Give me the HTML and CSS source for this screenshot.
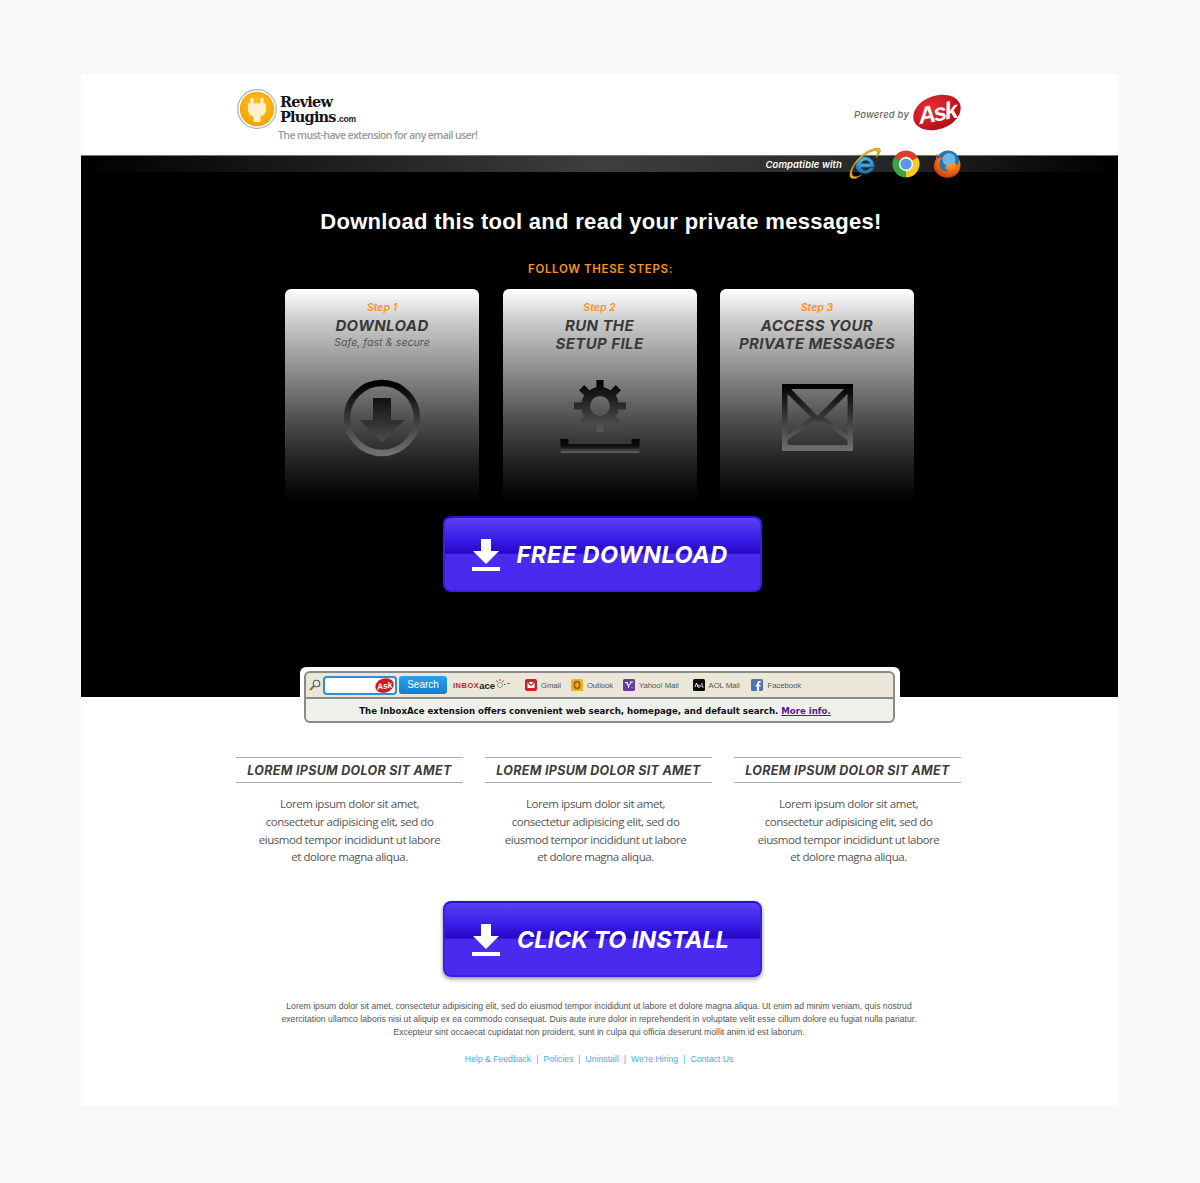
FILE: index.html
```html
<!DOCTYPE html>
<html lang="en">
<head>
<meta charset="utf-8">
<title>Review Plugins</title>
<link rel="stylesheet" href="styles.css">
</head>
<body>
<svg class="defs" width="0" height="0" aria-hidden="true">
  <defs>
    <linearGradient id="iconGrad" x1="0" y1="0" x2="0" y2="1">
      <stop offset="0" stop-color="#000"/>
      <stop offset="1" stop-color="#707070"/>
    </linearGradient>
    <linearGradient id="arrowGrad" x1="0" y1="0" x2="0" y2="1">
      <stop offset="0" stop-color="#111"/>
      <stop offset="1" stop-color="#4c4c4c"/>
    </linearGradient>
    <linearGradient id="baseGrad" x1="0" y1="0" x2="0" y2="1">
      <stop offset="0" stop-color="#000"/>
      <stop offset="0.55" stop-color="#111"/>
      <stop offset="1" stop-color="#666"/>
    </linearGradient>
    <linearGradient id="gearGrad" x1="0" y1="0" x2="0" y2="1">
      <stop offset="0" stop-color="#000"/>
      <stop offset="1" stop-color="#5c5c5c"/>
    </linearGradient>
    <radialGradient id="goldGrad" cx="0.5" cy="0.4" r="0.6">
      <stop offset="0" stop-color="#ffc52e"/>
      <stop offset="1" stop-color="#f5a200"/>
    </radialGradient>
    <radialGradient id="askGrad" cx="0.4" cy="0.3" r="0.8">
      <stop offset="0" stop-color="#ee2a33"/>
      <stop offset="1" stop-color="#a50d14"/>
    </radialGradient>
    <radialGradient id="ieGrad" cx="0.5" cy="0.3" r="0.8">
      <stop offset="0" stop-color="#5ec3f0"/>
      <stop offset="1" stop-color="#0e62a8"/>
    </radialGradient>
    <radialGradient id="foxGrad" cx="0.6" cy="0.3" r="0.8">
      <stop offset="0" stop-color="#ffc928"/>
      <stop offset="0.55" stop-color="#ee6a12"/>
      <stop offset="1" stop-color="#b72d0c"/>
    </radialGradient>
    <mask id="gearMask" maskUnits="userSpaceOnUse" x="0" y="0" width="80" height="76">
      <g transform="translate(40 26)">
        <circle r="19" fill="#fff"/>
        <g fill="#fff">
          <rect x="-3.6" y="-26" width="7.2" height="12"/>
          <rect x="-3.6" y="-26" width="7.2" height="12" transform="rotate(45)"/>
          <rect x="-3.6" y="-26" width="7.2" height="12" transform="rotate(90)"/>
          <rect x="-3.6" y="-26" width="7.2" height="12" transform="rotate(135)"/>
          <rect x="-3.6" y="-26" width="7.2" height="12" transform="rotate(180)"/>
          <rect x="-3.6" y="-26" width="7.2" height="12" transform="rotate(225)"/>
          <rect x="-3.6" y="-26" width="7.2" height="12" transform="rotate(270)"/>
          <rect x="-3.6" y="-26" width="7.2" height="12" transform="rotate(315)"/>
        </g>
        <circle r="10" fill="#000"/>
      </g>
    </mask>
  </defs>
</svg>

<div class="panel">
  <header class="top">
    <div class="brand">
      <svg class="brand-mark" viewBox="0 0 40 40" aria-hidden="true">
        <circle cx="20" cy="20" r="19.300" fill="#fff" stroke="#a9b5a8" stroke-width="1.200"/>
        <circle cx="20" cy="20" r="17.200" fill="url(#goldGrad)"/>
        <path d="M13.500 9h3v5.500h7V9h3v5.500h2.500v6.500c0 3.400-2.500 5.800-5.500 6.200V33h-7v-5.800c-3-.4-5.500-2.800-5.500-6.200v-6.500h2.500z" fill="#fff0cc"/>
      </svg>
      <div class="brand-copy">
        <div class="brand-name">
          <span class="brand-line">Review</span>
          <span class="brand-line">Plugins<small class="brand-com">.com</small></span>
        </div>
        <div class="tagline">The must-have extension for any email user!</div>
      </div>
    </div>
    <div class="powered">
      <span class="powered-label">Powered by</span>
      <svg class="ask-logo" viewBox="0 0 48 37" aria-hidden="true">
        <ellipse cx="24" cy="18.500" rx="24.500" ry="16.800" transform="rotate(-20 24 18.500)" fill="url(#askGrad)"/>
        <text x="24" y="27" text-anchor="middle" class="ask-text" transform="rotate(-10 24 18.500)">Ask</text>
      </svg>
    </div>
  </header>

  <section class="hero">
    <div class="compat">
      <span class="compat-label">Compatible with</span>
      <svg class="ie" viewBox="0 0 34 34" aria-hidden="true">
        <path d="M8.600 18.600a9.400 9.400 0 1 1 18.700 1.700H14.200c.5 3.400 5.900 4.700 8.800.7h4c-3.300 8.200-18.400 7.500-18.400-2.400zM14.300 16.600h8.800c-.7-4.300-8.200-4.300-8.800 0z" fill="url(#ieGrad)" fill-rule="evenodd" stroke="#0c4f8c" stroke-width=".5"/>
        <path d="M4 31C0 28 6 15 15 8 23 2 31 -.5 33 2c1.500 2-1 6-4 9 1-3 2-6 .5-7C27 2.500 20 6 14 11 7 17 3 25 6 29c2 1.300 6 .3 9-1.500-4 3.500-8 5.300-11 3.500z" fill="#e9b21c" stroke="#8d6a10" stroke-width=".4"/>
      </svg>
      <svg class="browser" viewBox="0 0 28 28" aria-hidden="true">
        <path d="M14 14 2.300 7.200A13.500 13.500 0 0 1 25.700 7.200z" fill="#dc3c2e"/>
        <path d="M14 14 25.700 7.200A13.500 13.500 0 0 1 14 27.500z" fill="#f7cb1e"/>
        <path d="M14 14 14 27.500A13.500 13.500 0 0 1 2.300 7.200z" fill="#3aa443"/>
        <circle cx="14" cy="14" r="7.200" fill="#f2f2f2"/>
        <circle cx="14" cy="14" r="5.600" fill="#5a97df"/>
      </svg>
      <svg class="browser" viewBox="0 0 28 28" aria-hidden="true">
        <circle cx="15" cy="12" r="11.500" fill="#2f72b4"/>
        <circle cx="16" cy="9.500" r="6.500" fill="#6cb6e6"/>
        <path d="M4 3c-1 2-1 4-1 6C.5 13 0 18 2.500 21.500 6 27 13 29 19 27c5-1.500 8.500-6 8.500-12 0-2-.6-4-1.500-5.500.2 3-1 5-3 6.500 .5-2-.5-3-2-4-1 3-6 1.500-8 4-1.500 2 .5 4.500 3 5-4 1.500-9-1-9.500-6.500C5.800 11.500 7.500 9 10 8 7.500 7.500 5.500 8.500 4.500 9.500 4 7.500 4 5 4 3z" fill="url(#foxGrad)"/>
      </svg>
    </div>

    <h1 class="headline">Download this tool and read your private messages!</h1>
    <p class="follow">FOLLOW THESE STEPS:</p>

    <div class="steps">
      <article class="step">
        <p class="step-no">Step 1</p>
        <h2 class="step-title">DOWNLOAD</h2>
        <p class="step-sub">Safe, fast &amp; secure</p>
        <svg class="step-icon step-icon-a" width="78" height="78" viewBox="0 0 78 78" aria-hidden="true">
          <circle cx="39" cy="39" r="35" fill="none" stroke="url(#iconGrad)" stroke-width="6.500"/>
          <path d="M30 19h18v22h14L39 63 16 41h14z" fill="url(#arrowGrad)"/>
        </svg>
      </article>
      <article class="step">
        <p class="step-no">Step 2</p>
        <h2 class="step-title">RUN THE<br>SETUP FILE</h2>
        <svg class="step-icon step-icon-b" width="80" height="76" viewBox="0 0 80 76" aria-hidden="true">
          <rect width="80" height="54" fill="url(#gearGrad)" mask="url(#gearMask)"/>
          <path d="M0.500 59h8v5h63v-5h8v14h-79z" fill="url(#baseGrad)"/>
        </svg>
      </article>
      <article class="step">
        <p class="step-no">Step 3</p>
        <h2 class="step-title">ACCESS YOUR<br>PRIVATE MESSAGES</h2>
        <svg class="step-icon step-icon-c" width="71" height="67" viewBox="0 0 71 67" aria-hidden="true">
          <path fill="url(#iconGrad)" fill-rule="evenodd" d="M0 0h71v67H0zM9 5h53L35.500 32zM5.500 10 29 33 5.500 51zM65.500 10 42 33 65.500 51zM5.500 61v-5L32 36.500l3.500 2.500 3.500-2.500L65.500 56v5z"/>
        </svg>
      </article>
    </div>

    <a class="cta" href="#">
      <svg class="cta-icon" viewBox="0 0 28 33" aria-hidden="true">
        <path d="M9 0h10v12h8L14 25 1 12h8zM0 28h28v4H0z" fill="#fff"/>
      </svg>
      <span class="cta-label">FREE DOWNLOAD</span>
    </a>
  </section>

  <div class="bar-wrap">
    <div class="bar">
      <div class="bar-top">
        <svg class="bar-glass" viewBox="0 0 12 12" aria-hidden="true">
          <circle cx="7.500" cy="4.500" r="3.300" fill="#d7eef8" stroke="#555" stroke-width="1.100"/>
          <path d="M5 7 1 11" stroke="#9a6a24" stroke-width="2"/>
        </svg>
        <div class="bar-input">
          <svg class="bar-ask" viewBox="0 0 20 16" aria-hidden="true">
            <ellipse cx="10" cy="8" rx="10" ry="7.500" transform="rotate(-18 10 8)" fill="#d5161e"/>
            <text x="10" y="11.500" text-anchor="middle" class="bar-ask-text" transform="rotate(-10 10 8)">Ask</text>
          </svg>
        </div>
        <span class="bar-search">Search</span>
        <span class="bar-inbox"><b class="inbox-red">INBOX</b><b class="inbox-dark">ace</b>
          <svg class="inbox-splat" viewBox="0 0 15 10" aria-hidden="true">
            <circle cx="5" cy="6" r="2.400" fill="#f4f0e4" stroke="#777" stroke-width=".8"/>
            <path d="M5 2V0M2.500 3 1.500 1.500M7.500 3 8.500 1.500M9 5.500h1.500" stroke="#c8242a" stroke-width="1"/>
            <path d="M12 4.500h3" stroke="#555" stroke-width=".8"/>
          </svg>
        </span>
        <span class="bar-item bar-gmail">
          <svg class="bar-ico" viewBox="0 0 12 12" aria-hidden="true">
            <rect width="12" height="12" rx="2" fill="#c9222c"/>
            <path d="M2.500 3h7v6h-7z" fill="#fff"/>
            <path d="M2.500 3 6 6.500 9.500 3" fill="none" stroke="#c9222c" stroke-width="1.200"/>
          </svg>Gmail</span>
        <span class="bar-item">
          <svg class="bar-ico" viewBox="0 0 12 12" aria-hidden="true">
            <rect width="12" height="12" rx="1.500" fill="#f2b01e"/>
            <ellipse cx="6" cy="6" rx="2.700" ry="3.500" fill="none" stroke="#8a5a06" stroke-width="1.500"/>
          </svg>Outlook</span>
        <span class="bar-item">
          <svg class="bar-ico" viewBox="0 0 12 12" aria-hidden="true">
            <rect width="12" height="12" rx="1.500" fill="#6a3a9c"/>
            <path d="M2 3.500h3M3.500 3.500 5.500 7v2M8 3.500 5.500 7M7 3h3M9 8.500v.5" stroke="#fff" stroke-width="1.100" fill="none"/>
          </svg>Yahoo! Mail</span>
        <span class="bar-item bar-aol">
          <svg class="bar-ico" viewBox="0 0 12 12" aria-hidden="true">
            <rect width="12" height="12" rx="1.500" fill="#0c0c0c"/>
            <path d="M2 8 3.500 4 5 8M6 6a1.200 1.200 0 1 0 .01 0M9 4v4h1.500" stroke="#fff" stroke-width=".9" fill="none"/>
          </svg>AOL Mail</span>
        <span class="bar-item bar-fb">
          <svg class="bar-ico" viewBox="0 0 12 12" aria-hidden="true">
            <rect width="12" height="12" rx="1.500" fill="#4a74b4"/>
            <path d="M8 12V7.500h1.500V5.700H8V4.600c0-.6.300-.9.900-.9h.8V2H8.500C7 2 6.100 3 6.100 4.400v1.300H4.700v1.800h1.400V12z" fill="#fff"/>
          </svg>Facebook</span>
      </div>
      <p class="bar-note">The InboxAce extension offers convenient web search, homepage, and default search. <a class="bar-more" href="#">More info.</a></p>
    </div>
  </div>

  <section class="columns">
    <article class="col">
      <h3 class="col-title">LOREM IPSUM DOLOR SIT AMET</h3>
      <p class="col-text">Lorem ipsum dolor sit amet,<br>consectetur adipisicing elit, sed do<br>eiusmod tempor incididunt ut labore<br>et dolore magna aliqua.</p>
    </article>
    <article class="col col-mid">
      <h3 class="col-title">LOREM IPSUM DOLOR SIT AMET</h3>
      <p class="col-text">Lorem ipsum dolor sit amet,<br>consectetur adipisicing elit, sed do<br>eiusmod tempor incididunt ut labore<br>et dolore magna aliqua.</p>
    </article>
    <article class="col col-end">
      <h3 class="col-title">LOREM IPSUM DOLOR SIT AMET</h3>
      <p class="col-text">Lorem ipsum dolor sit amet,<br>consectetur adipisicing elit, sed do<br>eiusmod tempor incididunt ut labore<br>et dolore magna aliqua.</p>
    </article>
  </section>

  <a class="cta cta-shadow" href="#">
    <svg class="cta-icon" viewBox="0 0 28 33" aria-hidden="true">
      <path d="M9 0h10v12h8L14 25 1 12h8zM0 28h28v4H0z" fill="#fff"/>
    </svg>
    <span class="cta-label">CLICK TO INSTALL</span>
  </a>

  <footer class="foot">
    <p class="legal">Lorem ipsum dolor sit amet, consectetur adipisicing elit, sed do eiusmod tempor incididunt ut labore et dolore magna aliqua. Ut enim ad minim veniam, quis nostrud<br>exercitation ullamco laboris nisi ut aliquip ex ea commodo consequat. Duis aute irure dolor in reprehenderit in voluptate velit esse cillum dolore eu fugiat nulla pariatur.<br>Excepteur sint occaecat cupidatat non proident, sunt in culpa qui officia deserunt mollit anim id est laborum.</p>
    <nav class="links">
      <a href="#">Help &amp; Feedback</a><span class="sep">|</span><a href="#">Policies</a><span class="sep">|</span><a href="#">Uninstall</a><span class="sep">|</span><a href="#">We're Hiring</a><span class="sep">|</span><a href="#">Contact Us</a>
    </nav>
  </footer>
</div>
</body>
</html>
```
FILE: styles.css
```css
* { box-sizing: border-box; }
html, body { margin: 0; padding: 0; }
body {
  background: #f8f8f8;
  padding: 74px 82px 77px 81px;
  font-family: "Liberation Sans", Arial, sans-serif;
}
p, h1, h2, h3 { margin: 0; }
.defs { display: block; height: 0; }
.panel {
  background: #fff;
  height: 1032px;
  display: flex;
  flex-direction: column;
}

/* header */
.top {
  height: 81px;
  flex: none;
  padding: 0 157px 0 156px;
  display: flex;
  justify-content: space-between;
  border-bottom: 0;
}
.brand { display: flex; padding-top: 15px; }
.brand-mark { width: 40px; height: 40px; flex: none; }
.brand-copy { margin-left: 1px; }
.brand-name {
  padding: 5px 0 0 2px;
  font-family: "DejaVu Serif", serif;
  font-weight: 700;
  font-size: 14.500px;
  line-height: 15px;
  letter-spacing: -0.8px;
  color: #141414;
}
.brand-line { display: block; }
.brand-com {
  font-family: "Liberation Sans", sans-serif;
  font-size: 8.500px;
  letter-spacing: -0.2px;
  margin-left: 1px;
}
.tagline {
  margin-top: 1px;
  font-family: "Open Sans", sans-serif;
  font-weight: 600;
  font-size: 10.500px;
  line-height: 14px;
  letter-spacing: -0.6px;
  color: #999;
  white-space: nowrap;
}
.powered { display: flex; align-items: center; height: 77px; }
.powered-label {
  font-family: Inter, sans-serif;
  font-style: italic;
  font-weight: 500;
  font-size: 9.500px;
  letter-spacing: 0.15px;
  color: #666;
  margin: 4px 4px 0 0;
}
.ask-logo { width: 48px; height: 37px; overflow: visible; }
.ask-text {
  font-family: "Liberation Sans", sans-serif;
  font-size: 24px;
  font-style: italic;
  font-weight: 700;
  fill: #fff;
  letter-spacing: -2px;
}

/* black hero */
.hero {
  background: #000;
  height: 542px;
  flex: none;
  border-top: 1px solid #3f87a8;
  display: flex;
  flex-direction: column;
  align-items: center;
}
.compat {
  align-self: stretch;
  height: 16px;
  flex: none;
  padding-right: 157px;
  display: flex;
  align-items: center;
  justify-content: flex-end;
  background: linear-gradient(90deg, #000 0%, #3e3e3e 50%, #2a2a2a 75%, #000 100%);
}
.compat-label {
  font-family: Inter, sans-serif;
  font-style: italic;
  font-weight: 600;
  font-size: 9.500px;
  letter-spacing: 0.1px;
  color: #fff;
  margin-right: 5px;
}
.ie { width: 34px; height: 34px; flex: none; margin-right: 11px; }
.browser { width: 28px; height: 28px; flex: none; margin-left: 0; }
.browser + .browser { margin-left: 13px; }
.headline {
  margin: 37px 0 0 3px;
  font-size: 22px;
  line-height: 26px;
  font-weight: 700;
  letter-spacing: 0.3px;
  color: #fff;
  text-align: center;
}
.follow {
  margin: 27px 0 0 2px;
  font-family: Inter, sans-serif;
  font-size: 11.500px;
  line-height: 14px;
  font-weight: 600;
  letter-spacing: 0.65px;
  color: #f7941d;
}
.steps {
  margin-top: 13px;
  width: 629px;
  display: flex;
  justify-content: space-between;
}
.step {
  width: 194px;
  height: 212px;
  border-radius: 6px 6px 0 0;
  background: linear-gradient(#fff 0%, #cfcfcf 14%, #8e8e8e 38%, #4e4e4e 62%, #1a1a1a 85%, #000 100%);
  display: flex;
  flex-direction: column;
  align-items: center;
  text-align: center;
  padding-top: 12px;
  font-family: Inter, sans-serif;
  font-style: italic;
}
.step-no {
  font-size: 10.500px;
  line-height: 13px;
  font-weight: 600;
  color: #f7941d;
}
.step-title {
  margin-top: 3px;
  font-size: 15px;
  line-height: 18px;
  font-weight: 700;
  letter-spacing: 0.4px;
  color: #3a3a3a;
}
.step-sub {
  font-size: 10.500px;
  line-height: 16px;
  font-weight: 400;
  letter-spacing: 0.05px;
  color: #555;
}
.step-icon { flex: none; display: block; }
.step-icon-a { margin-top: 28px; }
.step-icon-b { margin-top: 27px; }
.step-icon-c { margin-top: 31px; }
.cta {
  display: flex;
  align-items: center;
  flex: none;
  width: 319px;
  height: 76px;
  padding-left: 27px;
  margin: 15px 0 0 5px;
  border: 2px solid #3a1ee0;
  border-top-color: #2c10c8;
  border-radius: 8px;
  background: linear-gradient(#5a40f4 0%, #3b1fe6 28%, #2606c8 49%, #4a2aee 50%, #4a2aee 100%);
  text-decoration: none;
}
.cta-icon { width: 28px; height: 33px; flex: none; margin-top: 2px; }
.cta-label {
  margin-left: 17px;
  font-family: Inter, sans-serif;
  font-style: italic;
  font-weight: 700;
  font-size: 23.500px;
  letter-spacing: 0.5px;
  color: #fff;
  white-space: nowrap;
}

/* toolbar */
.bar-wrap {
  flex: none;
  width: 600px;
  margin: -30px 0 0 219px;
  background: #fff;
  padding: 4px 5px 0 4px;
  border-radius: 6px 6px 0 0;
}
.bar {
  width: 591px;
  border-radius: 6px;
  font-family: "Liberation Sans", sans-serif;
}
.bar-top {
  height: 29px;
  background: #ebe7d8;
  border: 2px solid #8a8a86;
  border-bottom-width: 3px;
  border-radius: 6px 6px 2px 2px;
  display: flex;
  align-items: center;
  padding-left: 3px;
}
.bar-glass { width: 12px; height: 12px; flex: none; }
.bar-input {
  width: 74px;
  height: 19px;
  margin-left: 2px;
  flex: none;
  background: #fff;
  border: 2px solid #2b8fdc;
  border-radius: 4px;
  display: flex;
  align-items: center;
  justify-content: flex-end;
  padding-right: 1px;
}
.bar-ask { width: 19px; height: 15px; }
.bar-ask-text {
  font-size: 9px;
  font-weight: 700;
  font-style: italic;
  fill: #fff;
}
.bar-search {
  width: 48px;
  height: 18px;
  margin-left: 2px;
  flex: none;
  border-radius: 3px;
  background: linear-gradient(#2ba1ec, #0f7fcf);
  color: #fff;
  font-size: 10px;
  line-height: 18px;
  text-align: center;
}
.bar-inbox {
  display: flex;
  align-items: center;
  margin-left: 6px;
  width: 72px;
  flex: none;
  font-size: 7.500px;
}
.inbox-red { color: #c8242a; font-size: 7.500px; letter-spacing: 0.5px; }
.inbox-dark { color: #222; font-size: 9.500px; }
.inbox-splat { width: 15px; height: 10px; margin-top: -3px; }
.bar-item {
  display: flex;
  align-items: center;
  gap: 4px;
  margin-left: 10px;
  font-size: 7.800px;
  letter-spacing: -0.1px;
  color: #555;
  white-space: nowrap;
}
.bar-gmail { margin-left: 0; }
.bar-aol { margin-left: 14px; }
.bar-fb { margin-left: 11px; gap: 5px; }
.bar-ico { width: 12px; height: 12px; flex: none; }
.bar-note {
  height: 24px;
  margin-top: -1px;
  padding-right: 9px;
  background: #eef0ec;
  border: 2px solid #8a8a86;
  border-top: 0;
  border-radius: 0 0 6px 6px;
  font-family: "DejaVu Sans", sans-serif;
  font-weight: 700;
  font-size: 8.600px;
  line-height: 24px;
  color: #111;
  text-align: center;
}
.bar-more { color: #5a189a; }

/* columns */
.columns {
  flex: none;
  width: 725px;
  margin: 34px 0 0 155px;
  display: flex;
  justify-content: space-between;
}
.col { width: 227px; text-align: center; }
.col-title {
  height: 26px;
  border-top: 1px solid #aaa;
  border-bottom: 1px solid #aaa;
  font-family: Inter, sans-serif;
  font-style: italic;
  font-weight: 700;
  font-size: 12.500px;
  line-height: 26px;
  letter-spacing: 0.3px;
  color: #3c3c3c;
  white-space: nowrap;
}
.col-text {
  margin-top: 12px;
  font-family: "Open Sans", sans-serif;
  font-size: 11.500px;
  line-height: 17.800px;
  letter-spacing: -0.45px;
  color: #555;
}
.col-mid .col-text { padding-right: 6px; }
.col-end .col-text { padding-left: 2px; }
.cta-shadow {
  margin: 35px 0 0 362px;
  box-shadow: 0 2px 4px rgba(0, 0, 0, 0.45);
}
.cta-shadow .cta-label { letter-spacing: -0.1px; }

/* footer */
.foot { text-align: center; margin-top: 23px; padding-right: 1px; }
.legal {
  font-size: 8.660px;
  line-height: 13px;
  color: #555;
}
.links {
  margin-top: 14px;
  font-size: 8.660px;
  line-height: 13px;
  color: #3bb0ea;
}
.links a { color: #3bb0ea; text-decoration: none; }
.sep { margin: 0 5px; }
```
